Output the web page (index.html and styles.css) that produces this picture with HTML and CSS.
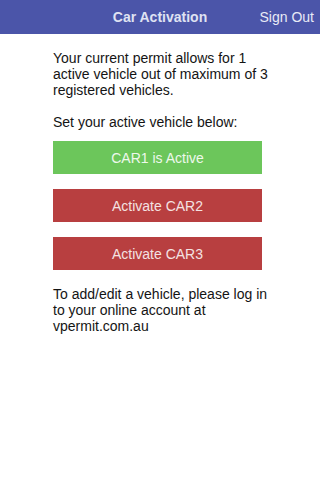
FILE: index.html
```html
<!DOCTYPE html>
<html>
<head>
    <meta charset="UTF-8" />
    <meta name="viewport" content="width=device-width, initial-scale=1.0"/>
    <title>Car Activation</title>
    <link rel="stylesheet" href="styles.css">
</head>
<body>
    <header class="topbar">
        <span class="topbar-side"></span>
        <h1 class="topbar-title">Car Activation</h1>
        <a class="topbar-action" href="#">Sign Out</a>
    </header>

    <main class="content">
        <p class="note">Your current permit allows for 1 active vehicle out of maximum of 3 registered vehicles.</p>
        <p class="note note--lead">Set your active vehicle below:</p>

        <div class="cars">
            <button class="car-btn car-btn--active">CAR1 is Active</button>
            <button class="car-btn">Activate CAR2</button>
            <button class="car-btn">Activate CAR3</button>
        </div>

        <p class="note">To add/edit a vehicle, please log in to your online account at vpermit.com.au</p>
    </main>
</body>
</html>
```

FILE: styles.css
```css
* {
    margin: 0;
    padding: 0;
    box-sizing: border-box;
}
body {
    font-family: "Liberation Sans", Arial, sans-serif;
    background: #ffffff;
    color: #141414;
}

/* top navigation bar */
.topbar {
    height: 34px;
    background: #4b55a9;
    display: grid;
    grid-template-columns: 1fr auto 1fr;
    align-items: center;
    padding: 0 6px 0 6px;
}
.topbar-title {
    font-size: 14px;
    font-weight: bold;
    color: #dfe2f2;
}
.topbar-action {
    justify-self: end;
    font-size: 14px;
    color: #e8eaf6;
    text-decoration: none;
}

/* page body */
.content {
    padding: 16px 45px 0 53px;
}
.note {
    font-size: 14px;
    line-height: 16px;
    margin-bottom: 16px;
}
.note--lead {
    margin-bottom: 11px;
}

.cars {
    display: flex;
    flex-direction: column;
    gap: 15px;
    margin: 0 13px 16px 0;
}
.car-btn {
    height: 33px;
    border: none;
    background: #b83f40;
    color: #f4e2e2;
    font-family: inherit;
    font-size: 14px;
}
.car-btn--active {
    background: #6cc65b;
    color: #eef8ec;
}
```
